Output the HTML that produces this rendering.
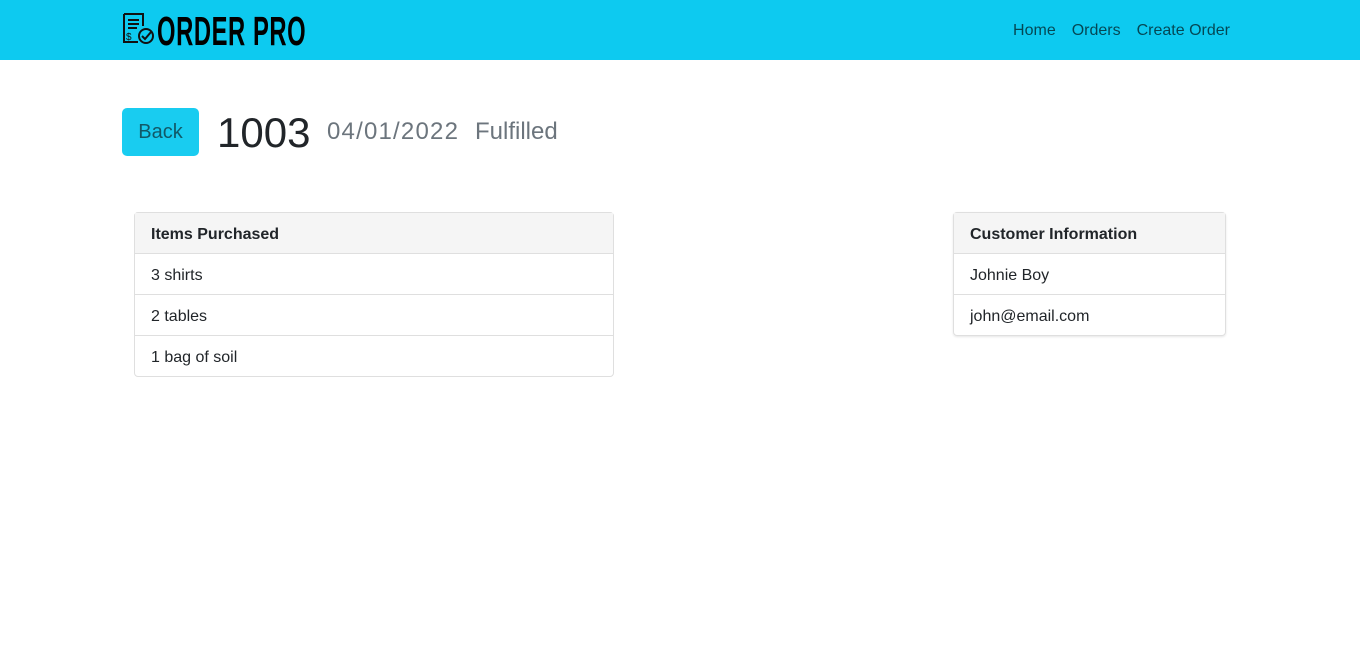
<!DOCTYPE html>
<html><head><style>
body{margin:0;font-family:"Liberation Sans",sans-serif;background:#fff;color:#212529}
.nav{height:60px;background:#0dcaf0;position:relative}
.logo{position:absolute;left:121px;top:12px}
.logotext{position:absolute;left:157px;top:8px;font-weight:bold;font-size:41px;line-height:46px;color:#000;transform:scaleX(0.58);transform-origin:left top;white-space:nowrap;letter-spacing:1px}
.links{position:absolute;right:130px;top:22px;font-size:16px;color:rgba(0,0,0,.65)}
.links span{margin-left:16px}
.back{position:absolute;left:122px;top:108px;width:77px;height:48px;background:#0dcaf0;border-radius:5px;font-size:20px;line-height:49px;text-align:center;color:#055160;opacity:.95}
.num{position:absolute;left:217px;top:110px;font-size:42px;line-height:46px;font-weight:500}
.sub{position:absolute;top:118px;font-size:24px;line-height:28px;color:#6c757d}
.card{position:absolute;border:1px solid #dfdfdf;border-radius:4px;font-size:16px}
.card div{height:40px;line-height:43px;padding-left:16px;border-top:1px solid #dfdfdf}
.card div.h{border-top:none;background:#f5f5f5;font-weight:bold}
</style></head><body>
<div class="nav">
<svg class="logo" width="34" height="34" viewBox="0 0 34 34" fill="none" stroke="#111" stroke-width="2"><path d="M3 2h19v12M3 2v28h14"/><path d="M7 8h11M7 12h11M7 16h9" /><text x="5" y="28" font-size="10" fill="#111" stroke="none" font-family="Liberation Sans">$</text><circle cx="25" cy="24" r="7"/><path d="M21 24l3 3 6-7"/></svg>
<div class="logotext">ORDER PRO</div>
<div class="links"><span>Home</span><span>Orders</span><span>Create Order</span></div>
</div>
<div class="back">Back</div>
<div class="num">1003</div>
<div class="sub" style="left:327px;letter-spacing:1.2px">04/01/2022</div>
<div class="sub" style="left:475px">Fulfilled</div>
<div class="card" style="left:134px;top:212px;width:478px"><div class="h">Items Purchased</div><div>3 shirts</div><div>2 tables</div><div>1 bag of soil</div></div>
<div class="card" style="left:953px;top:212px;width:271px;box-shadow:0 1px 2px rgba(0,0,0,.1)"><div class="h">Customer Information</div><div>Johnie Boy</div><div>john@email.com</div></div>
</body></html>
